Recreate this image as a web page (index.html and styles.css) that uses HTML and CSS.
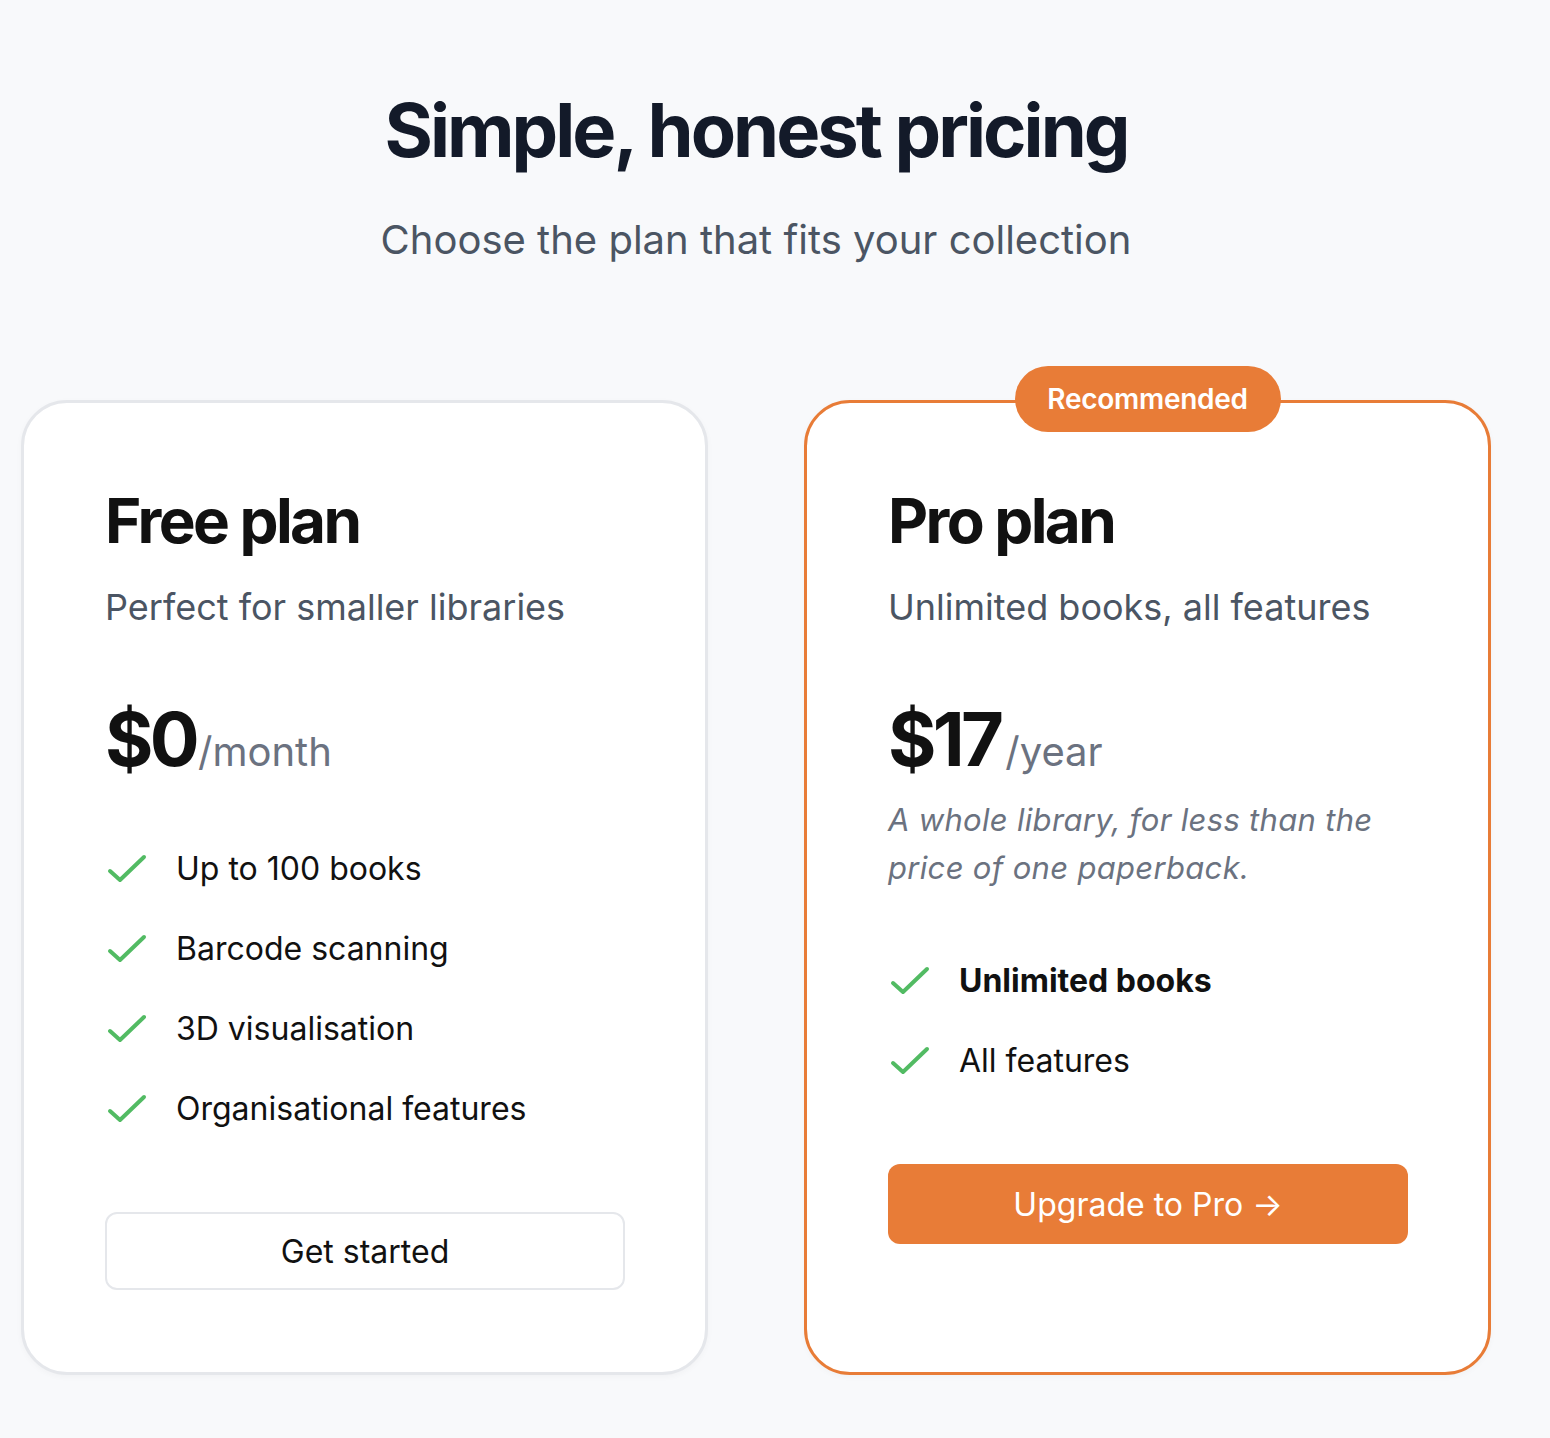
FILE: index.html
```html
<!DOCTYPE html>
<html lang="en">
<head>
<meta charset="utf-8">
<title>Pricing</title>
<link rel="stylesheet" href="styles.css">
</head>
<body>
<main class="page">
  <header class="hero">
    <h1 class="hero-title">Simple, honest pricing</h1>
    <p class="hero-sub">Choose the plan that fits your collection</p>
  </header>
  <section class="plans">
    <article class="plan">
      <h2 class="plan-name">Free plan</h2>
      <p class="plan-desc">Perfect for smaller libraries</p>
      <div class="price"><span class="amount">$0</span><span class="period">/month</span></div>
      <ul class="features">
        <li class="feature"><svg class="check" viewBox="0 0 40 30"><polyline points="3,17 13,26 37,3"/></svg><span>Up to 100 books</span></li>
        <li class="feature"><svg class="check" viewBox="0 0 40 30"><polyline points="3,17 13,26 37,3"/></svg><span>Barcode scanning</span></li>
        <li class="feature"><svg class="check" viewBox="0 0 40 30"><polyline points="3,17 13,26 37,3"/></svg><span>3D visualisation</span></li>
        <li class="feature"><svg class="check" viewBox="0 0 40 30"><polyline points="3,17 13,26 37,3"/></svg><span>Organisational features</span></li>
      </ul>
      <button class="btn btn-outline">Get started</button>
    </article>
    <article class="plan plan-pro">
      <span class="badge">Recommended</span>
      <h2 class="plan-name">Pro plan</h2>
      <p class="plan-desc">Unlimited books, all features</p>
      <div class="price"><span class="amount">$17</span><span class="period period-gap">/year</span></div>
      <p class="note">A whole library, for less than the price of one paperback.</p>
      <ul class="features features-pro">
        <li class="feature"><svg class="check" viewBox="0 0 40 30"><polyline points="3,17 13,26 37,3"/></svg><span class="strong">Unlimited books</span></li>
        <li class="feature"><svg class="check" viewBox="0 0 40 30"><polyline points="3,17 13,26 37,3"/></svg><span>All features</span></li>
      </ul>
      <button class="btn btn-primary">Upgrade to Pro →</button>
    </article>
  </section>
</main>
</body>
</html>
```
FILE: styles.css
```css
* { box-sizing: border-box; }
html, body { margin: 0; padding: 0; }
body {
  background: #f8f9fb;
  font-family: Inter, "Noto Sans", "Liberation Sans", sans-serif;
  color: #111111;
}
.page {
  width: 1470px;
  margin-left: 21px;
  padding-top: 86px;
  padding-bottom: 50px;
}
.hero { text-align: center; }
.hero-title {
  margin: 0;
  font-size: 74px;
  line-height: 88px;
  font-weight: 700;
  letter-spacing: -0.04em;
  color: #131a29;
}
.hero-sub {
  margin: 44px 0 0;
  font-size: 40px;
  line-height: 44px;
  color: #4b5563;
}
.plans {
  margin-top: 138px;
  display: grid;
  grid-template-columns: 687px 687px;
  column-gap: 96px;
}
.plan {
  position: relative;
  background: #ffffff;
  border: 3px solid #e5e7eb;
  border-radius: 46px;
  padding: 80px 80px 82px 81px;
  display: flex;
  flex-direction: column;
  box-shadow: 0 2px 6px rgba(0,0,0,0.03);
}
.plan-pro { border-color: #e87c37; }
.badge {
  position: absolute;
  top: -37px;
  left: 50%;
  transform: translateX(-50%);
  width: 266px;
  height: 66px;
  border-radius: 33px;
  background: #e87c37;
  color: #ffffff;
  font-size: 28px;
  font-weight: 600;
  letter-spacing: -0.01em;
  display: flex;
  align-items: center;
  justify-content: center;
}
.plan-name {
  margin: 0;
  font-size: 62px;
  line-height: 76px;
  font-weight: 700;
  letter-spacing: -0.042em;
  color: #111111;
}
.plan-desc {
  margin: 26px 0 0;
  font-size: 36px;
  line-height: 44px;
  color: #4b5563;
}
.price {
  margin-top: 65px;
  display: flex;
  align-items: baseline;
  line-height: 90px;
}
.amount {
  font-size: 74px;
  font-weight: 700;
  letter-spacing: -0.05em;
  color: #111111;
}
.period {
  font-size: 40px;
  color: #6b7280;
  margin-left: 2px;
}
.period-gap { margin-left: 5px; }
.note {
  margin: -1px 0 0;
  font-size: 31px;
  line-height: 48px;
  font-style: italic;
  color: #6b7280;
  letter-spacing: 0.01em;
}
.features {
  list-style: none;
  margin: 52px 0 0;
  padding: 0;
  display: flex;
  flex-direction: column;
  gap: 40px;
}
.features-pro { margin-top: 69px; }
.feature {
  display: flex;
  align-items: center;
  font-size: 32px;
  line-height: 40px;
  color: #111111;
}
.check {
  width: 40px;
  height: 30px;
  margin-left: 2px;
  margin-right: 29px;
  flex: none;
}
.check polyline {
  fill: none;
  stroke: #52bb63;
  stroke-width: 4;
  stroke-linecap: round;
  stroke-linejoin: round;
}
.strong { font-weight: 700; }
.btn {
  font-family: inherit;
  font-size: 32px;
  height: 78px;
  border-radius: 12px;
  width: 100%;
  cursor: pointer;
}
.btn-outline {
  margin-top: 83px;
  background: #ffffff;
  border: 2px solid #e5e7eb;
  color: #111111;
}
.btn-primary {
  margin-top: 83px;
  height: 80px;
  background: #e87c37;
  border: none;
  color: #ffffff;
}
```
